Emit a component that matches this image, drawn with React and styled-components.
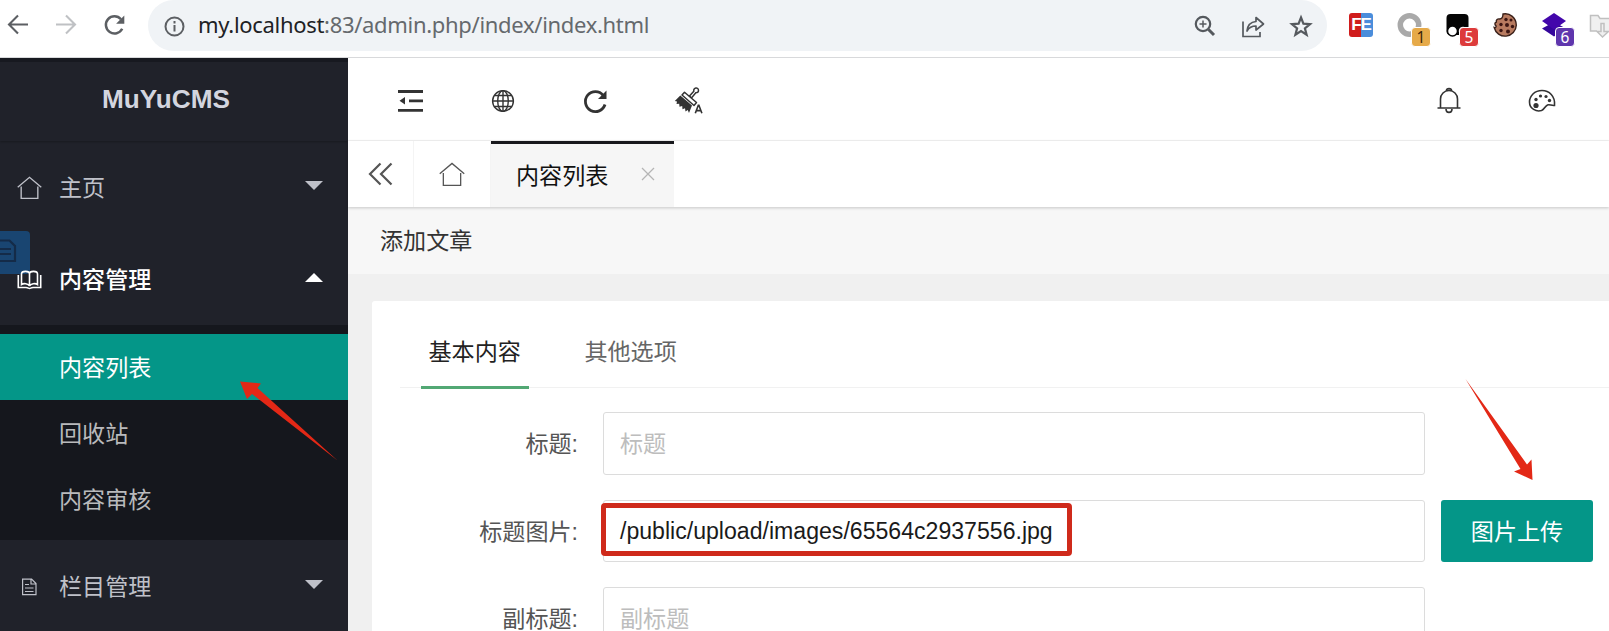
import React from 'react';
import styled, { createGlobalStyle, css } from 'styled-components';

const GlobalStyle = createGlobalStyle`
  * { box-sizing: border-box; }
  html, body { margin: 0; padding: 0; overflow: hidden; background: #fff; }
  body { font-family: "Liberation Sans", "Noto Sans CJK SC", sans-serif; font-size: 23.1px; }
  svg { display: block; flex: none; overflow: visible; }
`;

const Page = styled.div`
  position: relative;
  display: flex;
  flex-direction: column;
  width: 1609px;
  height: 631px;
  overflow: hidden;
`;

/* ---------- browser bar ---------- */
const BrowserBar = styled.header`
  display: flex;
  flex: none;
  height: 58px;
  border-bottom: 1px solid #d8d9db;
  background: #fff;
`;
const NavButtons = styled.div`
  display: flex;
  flex: none;
  gap: 24px;
  width: 148px;
  padding: 13px 0 0 6px;
  color: #5c5f63;
`;
const AddressBar = styled.div`
  display: flex;
  flex: none;
  align-items: center;
  width: 1179px;
  height: 51px;
  padding: 0 14px 0 14px;
  border-radius: 26px;
  background: #f0f3f6;
  color: #5c5f63;
`;
const Url = styled.div`
  flex: 1;
  margin-left: 12px;
  padding-bottom: 3px;
  font: 22px/48px "Noto Sans", "Open Sans", sans-serif;
  letter-spacing: -0.31px;
  color: #65696d;
  white-space: nowrap;
`;
const Host = styled.span`
  color: #202124;
`;
const AddressActions = styled.div`
  display: flex;
  gap: 24px;
  color: #55595e;
`;
const Extensions = styled.div`
  display: flex;
  flex: none;
  gap: 24px;
  padding: 13px 0 0 22px;
`;
const Extension = styled.div`
  position: relative;
  flex: none;
  width: 24px;
  height: 24px;
`;
const Badge = styled.span`
  position: absolute;
  left: 14px;
  top: 14px;
  width: 20px;
  height: 20px;
  border: 1px solid #fff;
  border-radius: 4px;
  background: ${(p) => p.$bg};
  color: ${(p) => p.$color || '#fff'};
  font: 15.5px/18px "Noto Sans", sans-serif;
  text-align: center;
`;
const FeLogo = styled.div`
  display: flex;
  align-items: center;
  justify-content: center;
  width: 24px;
  height: 24px;
  border-radius: 3px;
  background: linear-gradient(90deg, #d01c1c 0 50%, #4a8ddb 50%);
  color: #fff;
  font: bold 17px/24px "Liberation Sans", sans-serif;
  letter-spacing: -1px;
`;

/* ---------- sidebar ---------- */
const Body = styled.div`
  display: flex;
  flex: 1;
  min-height: 0;
`;
const Sidebar = styled.aside`
  flex: none;
  width: 348px;
  height: 573px;
  overflow: hidden;
  background: #20222a;
`;
const Brand = styled.div`
  height: 83px;
  padding-right: 16px;
  border-top: 4px solid #171920;
  box-shadow: 0 1px 2px rgba(0, 0, 0, 0.25);
  color: #d3d5df;
  font: bold 26.2px/74px "Liberation Sans", sans-serif;
  text-align: center;
`;
const MenuItem = styled.div`
  display: flex;
  align-items: center;
  height: 92px;
  padding: 0 25px 0 17px;
  color: ${(p) => (p.$open ? '#fff' : '#bfc1c9')};
  svg {
    position: relative;
    z-index: 2;
  }
`;
const MenuLabel = styled.span`
  flex: 1;
  margin-left: 17px;
  padding-top: 2px;
  line-height: 34px;
  font-weight: ${(p) => (p.$strong ? 500 : 400)};
`;
const Caret = styled.span`
  width: 0;
  height: 0;
  border: 9px solid transparent;
  ${(p) =>
    p.$up
      ? css`border-top: 0; border-bottom-color: currentColor; margin-top: -3px;`
      : css`border-bottom: 0; border-top-color: currentColor; margin-top: -4px;`}
`;
const SubMenu = styled.div`
  height: 215px;
  padding-top: 9px;
  background: #15171d;
`;
const SubItem = styled.div`
  height: 66px;
  padding-left: 59px;
  line-height: 69px;
  color: ${(p) => (p.$active ? '#fff' : '#b9babc')};
  background: ${(p) => (p.$active ? '#049688' : 'transparent')};
`;
const FloatingNote = styled.div`
  position: absolute;
  z-index: 1;
  left: 0;
  top: 231px;
  width: 30px;
  height: 43px;
  padding-top: 7px;
  border-radius: 0 4px 4px 0;
  background: #194571;
  color: #142b48;
  overflow: hidden;
`;

/* ---------- main area ---------- */
const Main = styled.main`
  display: flex;
  flex: 1;
  flex-direction: column;
  min-width: 0;
  background: #f0f0f0;
`;
const TopBar = styled.div`
  display: flex;
  justify-content: space-between;
  align-items: center;
  flex: none;
  height: 83px;
  padding: 4px 53px 0 49px;
  border-bottom: 1px solid #f3f3f3;
  background: #fff;
  color: #333;
`;
const Tools = styled.div`
  display: flex;
  align-items: center;
  gap: ${(p) => p.$gap}px;
`;
const TabBar = styled.div`
  display: flex;
  position: relative;
  flex: none;
  height: 66px;
  background: #fff;
  box-shadow: 0 1px 3px rgba(0, 0, 0, 0.2);
`;
const TabButton = styled.div`
  display: flex;
  align-items: center;
  justify-content: center;
  width: ${(p) => p.$width}px;
  border-right: 1px solid #f4f4f4;
  color: #555;
`;
const PageTab = styled.div`
  display: flex;
  align-items: center;
  justify-content: space-between;
  width: 183px;
  padding: 0 19px 4px 25px;
  border-top: 3px solid #18191d;
  background: #f6f6f6;
  color: #111;
`;
const Crumb = styled.div`
  flex: none;
  height: 67px;
  padding-left: 32px;
  background: #f7f7f7;
  color: #333;
  line-height: 68px;
`;
const Card = styled.section`
  flex: none;
  height: 360px;
  margin: 27px 0 0 24px;
  padding-left: 28px;
  border-radius: 3px 0 0 0;
  background: #fff;
`;
const CardTabs = styled.div`
  display: flex;
  gap: 48px;
  height: 87px;
  padding: 17px 0 0 21px;
  border-bottom: 1px solid #f1f1f1;
`;
const CardTab = styled.div`
  height: 71px;
  padding: 0 8px 0 7.500px;
  border-bottom: 3px solid ${(p) => (p.$active ? '#52a874' : 'transparent')};
  color: ${(p) => (p.$active ? '#222' : '#666')};
  line-height: 69px;
`;
const Form = styled.div`
  display: flex;
  flex-direction: column;
  gap: 25px;
  padding-top: 24px;
`;
const Row = styled.div`
  display: flex;
  height: 62.5px;
`;
const Label = styled.label`
  width: 178px;
  margin-right: 25px;
  color: #555;
  line-height: 65px;
  text-align: right;
`;
const Field = styled.div`
  position: relative;
  width: 822px;
  padding-left: 16px;
  border: 1px solid #dcdcdc;
  border-radius: 3px;
  color: ${(p) => (p.$placeholder ? '#bdbdbd' : '#1a1a1a')};
  line-height: ${(p) => (p.$placeholder ? 63 : 61)}px;
  white-space: nowrap;
`;
const Highlight = styled.span`
  position: absolute;
  left: -3px;
  top: 2px;
  width: 471px;
  height: 53px;
  border: 5px solid #cf2a1b;
  border-radius: 4px;
`;
const UploadButton = styled.div`
  width: 152px;
  margin-left: 16px;
  border-radius: 3px;
  background: #049688;
  color: #fff;
  line-height: 65px;
  text-align: center;
`;
const Annotations = styled.svg`
  position: absolute;
  z-index: 3;
  left: 0;
  top: 0;
  pointer-events: none;
`;

const Icon = ({ w = 24, h = 24, sw = 2, children, vb }) => (
  <svg width={w} height={h} viewBox={vb || `0 0 ${w} ${h}`} fill="none" stroke="currentColor" strokeWidth={sw}>
    {children}
  </svg>
);

const House = ({ w, sw }) => (
  <Icon w={w} h={w} vb="0 0 24 24" sw={sw}>
    <path d="M.7 11.8 12 2.200l11.3 9.600M4 11V22.500h16V11" />
  </Icon>
);

export default function App() {
  return (
    <Page>
      <GlobalStyle />
      <BrowserBar>
        <NavButtons>
          <Icon sw={2.1}><path d="M22 11.500H3.500M12 2.500l-9 9 9 9" /></Icon>
          <Icon sw={2.1}><path stroke="#bfc1c4" d="M2 11.500h18.500M12 2.500l9 9-9 9" /></Icon>
          <Icon sw={2.500}>
            <path d="M20.200 15.700a8.600 8.600 0 1 1-1.200-9.500" />
            <path d="M22.300 2.500v8.200h-8.200z" fill="currentColor" stroke="none" />
          </Icon>
        </NavButtons>
        <AddressBar>
          <Icon sw={2}>
            <circle cx="12.500" cy="12.500" r="9" />
            <path d="M12.500 11v6.500M12.500 7v2.500" />
          </Icon>
          <Url><Host>my.localhost</Host>:83/admin.php/index/index.html</Url>
          <AddressActions>
            <Icon sw={2.200}>
              <circle cx="10" cy="10" r="7.200" />
              <path d="m15.500 15.500 5.500 5.500" strokeWidth="3" />
              <path d="M6.500 10h7M10 6.500v7" strokeWidth="1.500" />
            </Icon>
            <Icon sw={1.700}>
              <path d="M2 7.500v15h17v-4.500" />
              <path d="M15 3.500 22.500 10 15 16v-4c-4 0-7 1.500-9 5 .5-5.500 3.500-9 9-9.500z" strokeLinejoin="round" />
            </Icon>
            <Icon sw={2.200}>
              <path d="m12 3.500 2.400 6.200 6.600.4-5.100 4.200 1.700 6.400-5.600-3.600-5.600 3.600 1.700-6.400-5.100-4.200 6.600-.4z" />
            </Icon>
          </AddressActions>
        </AddressBar>
        <Extensions>
          <Extension><FeLogo>FE</FeLogo></Extension>
          <Extension>
            <Icon sw={5.500}><circle cx="12.500" cy="12" r="9.200" stroke="#a9a9a9" /></Icon>
            <Badge $bg="#e6aa49" $color="#3a2408">1</Badge>
          </Extension>
          <Extension>
            <Icon sw={0}>
              <rect x="1.500" y="1" width="22" height="21" rx="4" fill="#050505" />
              <circle cx="7.500" cy="18" r="5" fill="#fff" stroke="#050505" strokeWidth="1.500" />
              <circle cx="18" cy="18" r="5" fill="#fff" stroke="#050505" strokeWidth="1.500" />
            </Icon>
            <Badge $bg="#dd3b3b">5</Badge>
          </Extension>
          <Extension>
            <Icon sw={1.400}>
              <path d="M10 1c7-1.500 13.300 4 13.300 11.300A11.200 11.200 0 0 1 1.200 14.500c1.200.5 2.300-.5 1.800-1.700-1.500-1-1.500-3 .3-3.800C3 7 4.500 5.500 6.500 6 9.500 6 10 3.500 10 1z" fill="#b87b60" stroke="#3b211a" />
              <g fill="#3b1512" stroke="none">
                <circle cx="13" cy="6.500" r="1.700" /><circle cx="18" cy="7" r="1.500" />
                <circle cx="14" cy="12" r="2" /><circle cx="8" cy="11.500" r="1.700" />
                <circle cx="19.500" cy="13.500" r="1.700" /><circle cx="8" cy="17.500" r="1.700" />
                <circle cx="15" cy="18.500" r="2" />
              </g>
            </Icon>
          </Extension>
          <Extension>
            <Icon sw={0}>
              <path d="M13 9 25 15.500 13 23.500 1 15.500z" fill="#35069b" />
              <path d="M13 0 25 8 13 16.500 1 8z" fill="#4306ab" />
            </Icon>
            <Badge $bg="#5f36ad">6</Badge>
          </Extension>
          <Extension>
            <Icon w={30} sw={1.500}>
              <path d="M8 18H1.500V2.500H9l2 3h17V18h-8M12 10.500h3v8h4.500L13.500 24 8 18.500h4z" stroke="#c0c0c0" fill="#f0f0f0" />
            </Icon>
          </Extension>
        </Extensions>
      </BrowserBar>

      <Body>
        <Sidebar>
          <Brand>MuYuCMS</Brand>
          <MenuItem>
            <House w={25} sw={1.300} />
            <MenuLabel>主页</MenuLabel>
            <Caret />
          </MenuItem>
          <MenuItem $open>
            <Icon w={25} h={16} sw={1.600}>
              <path d="M4.500 13.500V3c0-3.500 8-3.500 8 0v12c-1-2.500-6-3-8-1.500zM20.500 13.500V3c0-3.500-8-3.500-8 0v12c1-2.500 6-3 8-1.500z" />
              <path d="M1.300 4V16.500H9c2 0 2.500 1 3.500 1s1.500-1 3.500-1h7.700V4" />
            </Icon>
            <MenuLabel $strong>内容管理</MenuLabel>
            <Caret $up />
          </MenuItem>
          <SubMenu>
            <SubItem $active>内容列表</SubItem>
            <SubItem>回收站</SubItem>
            <SubItem>内容审核</SubItem>
          </SubMenu>
          <MenuItem>
            <Icon w={25} h={16} sw={1.200}>
              <path d="M5.600 1.100h9l4.400 4.400v11.200H5.600zM14 1.500V6h5M8 6.500h4M8 10h8.500M8 13.500h8.500" />
            </Icon>
            <MenuLabel>栏目管理</MenuLabel>
            <Caret />
          </MenuItem>
        </Sidebar>

        <Main>
          <TopBar>
            <Tools $gap={68}>
              <Icon w={26} sw={2.800}>
                <path d="M1 2.500h25M12 11.800h14M1 21.300h25" />
                <path d="M8 8v7.500L2.500 11.800z" fill="currentColor" stroke="none" />
              </Icon>
              <Icon w={24} sw={1.400}>
                <circle cx="12" cy="12" r="10.400" />
                <ellipse cx="12" cy="12" rx="5.300" ry="10.400" />
                <path d="M12 1.500v21M1.500 12h21M3.500 6.500h17M3.500 17.500h17" />
              </Icon>
              <Icon w={24} sw={2.800}>
                <path d="M22 15.500a10 10 0 1 1-1.800-9.200" />
                <path d="M23.500 1.500v8.500H15z" fill="currentColor" stroke="none" />
              </Icon>
              <Icon w={28} h={28} sw={1.500}>
                <path d="m14.500 9 4.300-4.800c-.8-3.700 4.700-4.500 4.700-.7 0 2-1.500 2.300-2.700 2.300L16.500 11z" fill="#fff" />
                <path d="M7 8 9.500 5.200 21.500 15.500 19 18.500z" fill="#fff" strokeLinejoin="round" />
                <path d="M5.300 8.500 17 18.500l-3 7.500-1.300-3-2.200 1.500-.5-3.200-2.500 1-.3-3.200-2.700.6-.3-3-2.700.3.500-2.500L-.2 14z" fill="currentColor" stroke="none" />
                <path d="m20.300 26.300 3-8h.6l3 8M21.500 23.600h4.500" strokeWidth="1.600" />
              </Icon>
            </Tools>
            <Tools $gap={66}>
              <Icon w={26} h={26} sw={1.600}>
                <path d="M1.500 20h23M4.500 20V11a8.500 8.500 0 0 1 17 0v9M10.500 2.500c0-2.500 5-2.500 5 0M10 21c0 4.500 6 4.500 6 0" />
              </Icon>
              <Icon w={28} h={26} sw={1.600}>
                <path d="M26.500 17.500C27.500 8 21 2.500 14 2.500 6.500 2.500 1.500 8 1.500 14c0 7 7 10 12 8.500 3-1 3-4 6-5.500 2-1 4 1 7 .5z" />
                <g fill="currentColor" stroke="none">
                  <circle cx="8" cy="17.500" r="2.600" /><circle cx="8" cy="11.500" r="1.700" />
                  <circle cx="12.500" cy="8" r="1.600" /><circle cx="18" cy="8.500" r="1.600" />
                  <circle cx="21.500" cy="12.500" r="1.700" />
                </g>
              </Icon>
            </Tools>
          </TopBar>
          <TabBar>
            <TabButton $width={66}>
              <Icon sw={2.200}><path d="M11.500 1.500 1 12l10.500 10.500M22.500 1.500 12 12l10.500 10.500" /></Icon>
            </TabButton>
            <TabButton $width={77}><House w={26} sw={1.200} /></TabButton>
            <PageTab>
              内容列表
              <Icon w={14} h={14} sw={1.300}><path stroke="#b5b5b5" d="m1 1 12 12M13 1 1 13" /></Icon>
            </PageTab>
          </TabBar>
          <Crumb>添加文章</Crumb>
          <Card>
            <CardTabs>
              <CardTab $active>基本内容</CardTab>
              <CardTab>其他选项</CardTab>
            </CardTabs>
            <Form>
              <Row>
                <Label>标题:</Label>
                <Field $placeholder>标题</Field>
              </Row>
              <Row>
                <Label>标题图片:</Label>
                <Field>
                  /public/upload/images/65564c2937556.jpg
                  <Highlight />
                </Field>
                <UploadButton>图片上传</UploadButton>
              </Row>
              <Row>
                <Label>副标题:</Label>
                <Field $placeholder>副标题</Field>
              </Row>
            </Form>
          </Card>
        </Main>
      </Body>

      <FloatingNote>
        <Icon w={17} h={26} sw={2.200}>
          <path d="M-2 2.500H9.500l5.500 5.500v15H-2M0 11h11M0 16h11" />
        </Icon>
      </FloatingNote>
      <Annotations width="1609" height="631" fill="#e32816">
        <path d="M240 381.500 261 383.500 257.500 388 337.500 460.500 252 394 247 399z" />
        <path d="M1532.500 480 1514 471.500 1520.500 469 1465.500 379 1527 464.500 1531.500 459.500z" />
      </Annotations>
    </Page>
  );
}
